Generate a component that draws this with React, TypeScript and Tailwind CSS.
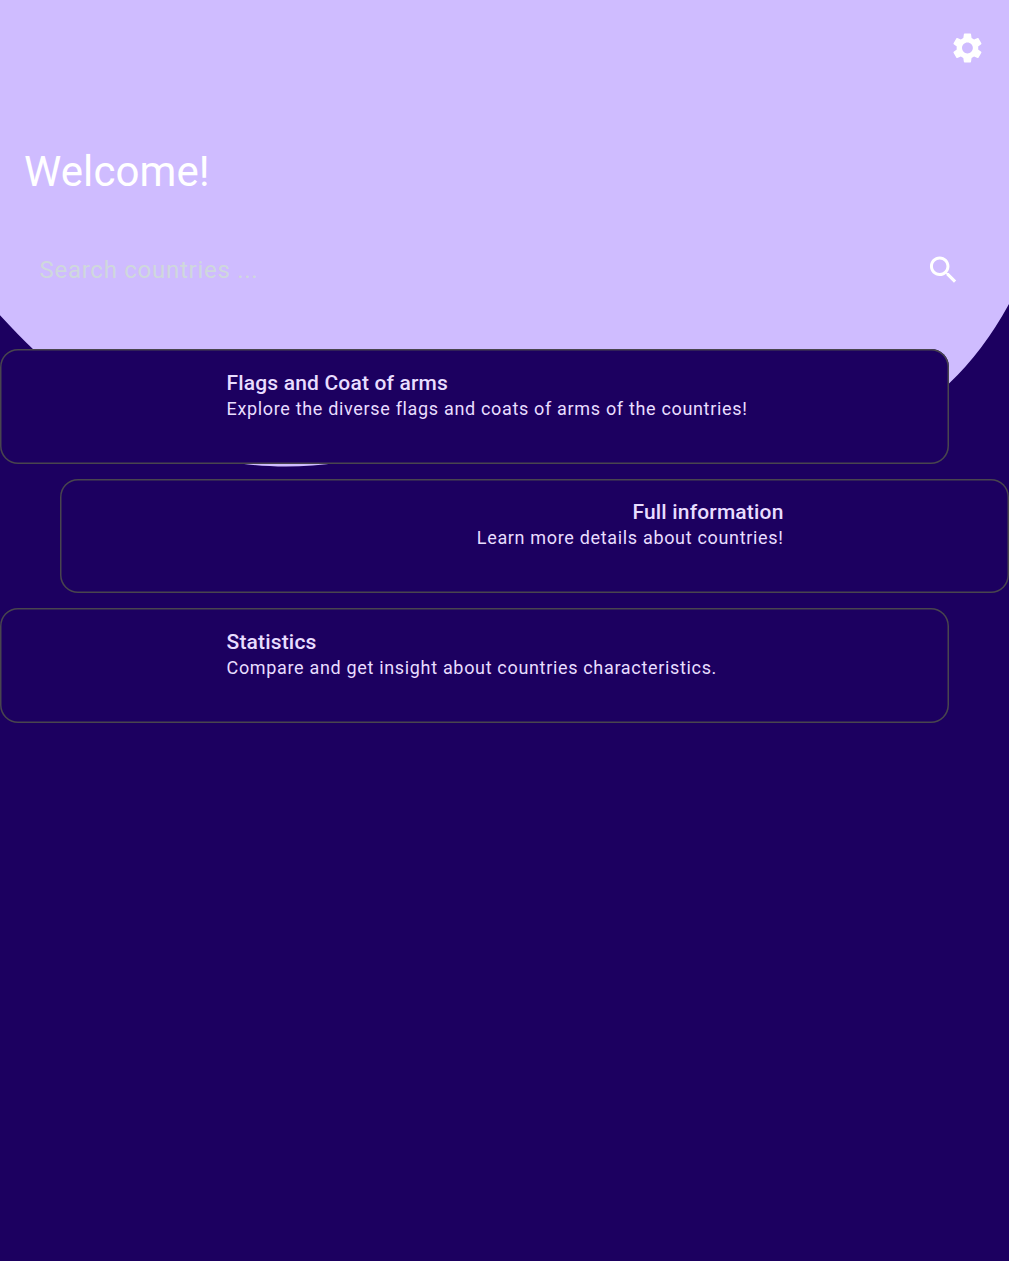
const cards = [
  {
    title: 'Flags and Coat of arms',
    text: 'Explore the diverse flags and coats of arms of the countries!',
    layout: 'mb-[15px] h-[115px] items-start pt-[19px]',
  },
  {
    title: 'Full information',
    text: 'Learn more details about countries!',
    layout: 'mb-[15px] h-[114px] items-end self-end pt-[18px]',
  },
  {
    title: 'Statistics',
    text: 'Compare and get insight about countries characteristics.',
    layout: 'h-[115px] items-start pt-[19px]',
  },
];

export default function App() {
  return (
    <div className="relative h-[1261px] w-[1009px] overflow-hidden bg-[#1c0060] font-[Roboto,sans-serif]">
      <svg className="absolute inset-0" width="1009" height="1261" viewBox="0 0 1009 1261" fill="#cfbcff">
        <path d="M0 0H1009V304Q983 351.5 949 383.5L850 440L400 450Q338 466.5 286 466.5C192 466.5 107 431 0 315.25Z" />
      </svg>
      <div className="relative flex flex-col">
        <header className="flex h-[349px] flex-col text-white">
          <div className="flex justify-end px-6 pt-[30px]">
            <svg width="36" height="36" viewBox="-0.3 0 24 24" fill="currentColor">
              <path d="M19.14 12.94c.04-.3.06-.61.06-.94 0-.32-.02-.64-.07-.94l2.03-1.58c.18-.14.23-.41.12-.61l-1.92-3.32c-.12-.22-.37-.29-.59-.22l-2.39.96c-.5-.38-1.03-.7-1.62-.94l-.36-2.54c-.04-.24-.24-.41-.48-.41h-3.84c-.24 0-.43.17-.47.41l-.36 2.54c-.59.24-1.13.57-1.62.94l-2.39-.96c-.22-.08-.47 0-.59.22L2.74 8.87c-.12.21-.08.47.12.61l2.03 1.58c-.05.3-.09.63-.09.94s.02.64.07.94l-2.03 1.58c-.18.14-.23.41-.12.61l1.92 3.32c.12.22.37.29.59.22l2.39-.96c.5.38 1.03.7 1.62.94l.36 2.54c.05.24.24.41.48.41h3.84c.24 0 .44-.17.47-.41l.36-2.54c.59-.24 1.13-.56 1.62-.94l2.39.96c.22.08.47 0 .59-.22l1.92-3.32c.12-.22.07-.47-.12-.61l-2.01-1.58zM12 15.6c-1.98 0-3.6-1.62-3.6-3.6s1.62-3.6 3.6-3.6 3.6 1.62 3.6 3.6-1.62 3.6-3.6 3.6z" />
            </svg>
          </div>
          <h1 className="mt-[79px] px-6 text-[42px] leading-[54px] font-normal tracking-[0.1px]">Welcome!</h1>
          <div className="mt-[53px] flex h-9 items-center justify-between pr-12 pl-[39.5px]">
            <span className="text-[24px] leading-9 tracking-[0.73px] text-[#cfd8dc]">Search countries ...</span>
            <svg width="36" height="36" viewBox="-0.3 0 24 24" fill="currentColor">
              <path d="M15.5 14h-.79l-.28-.27C15.41 12.59 16 11.11 16 9.5 16 5.91 13.09 3 9.5 3S3 5.91 3 9.5 5.91 16 9.5 16c1.61 0 3.09-.59 4.23-1.57l.27.28v.79l5 4.99L20.49 19l-4.99-5zm-6 0C7.01 14 5 11.99 5 9.5S7.01 5 9.5 5 14 7.01 14 9.5 11.99 14 9.5 14z" />
            </svg>
          </div>
        </header>
        <main className="flex flex-col">
          {cards.map((c) => (
            <section
              key={c.title}
              className={`flex w-[949px] flex-col rounded-[18px] bg-[#1c0060] pr-[225.5px] pl-[226.5px] text-[#e8ddff] shadow-[inset_0_0_0_1.5px_#49454e] ${c.layout}`}
            >
              <h2 className="text-[21px] leading-[30px] font-medium tracking-[0.17px] whitespace-nowrap">{c.title}</h2>
              <p className="-mt-px text-[18px] leading-6 tracking-[0.67px] whitespace-nowrap">{c.text}</p>
            </section>
          ))}
        </main>
      </div>
    </div>
  );
}
